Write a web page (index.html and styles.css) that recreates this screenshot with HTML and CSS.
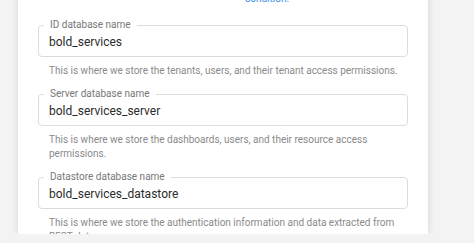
FILE: index.html
```html
<!DOCTYPE html>
<html lang="en">
<head>
  <meta charset="UTF-8" />
  <title>Database configuration</title>
  <link rel="stylesheet" href="styles.css">
</head>
<body>
  <div class="page">
    <div class="card">
      <p class="note"><a href="#">condition.</a></p>

      <fieldset class="field">
        <legend>ID database name</legend>
        <div class="value">bold_services</div>
      </fieldset>
      <p class="hint">This is where we store the tenants, users, and their tenant access permissions.</p>

      <fieldset class="field">
        <legend>Server database name</legend>
        <div class="value">bold_services_server</div>
      </fieldset>
      <p class="hint">This is where we store the dashboards, users, and their resource access permissions.</p>

      <fieldset class="field">
        <legend>Datastore database name</legend>
        <div class="value">bold_services_datastore</div>
      </fieldset>
      <p class="hint">This is where we store the authentication information and data extracted from REST data sources.</p>
    </div>
  </div>
</body>
</html>
```

FILE: styles.css
```css
* {
  box-sizing: border-box;
}

body {
  margin: 0;
  font-family: Roboto, 'Liberation Sans', sans-serif;
  background: #f3f3f3;
  overflow: hidden;
}

.page {
  padding-left: 18px;
  height: 243px;
}

.card {
  width: 410px;
  height: 100%;
  background: #fff;
  box-shadow: 0 0 8px rgba(0, 0, 0, 0.12);
  padding: 0 20px;
}

.note {
  margin: -9px 0 13px;
  padding-left: 207px;
  font-size: 10px;
  line-height: 15px;
}

.note a {
  color: #3d8ee8;
  text-decoration: none;
}

.field {
  margin: 10px 0 0;
  padding: 0 10px 4px;
  border: 1px solid #dcdcdc;
  border-radius: 4px;
  min-width: 0;
}

.note + .field {
  margin-top: 0;
}

.field legend {
  font-size: 10px;
  line-height: 12px;
  color: #777;
  padding: 0 6px;
  margin-left: -5px;
}

.value {
  font-size: 12px;
  line-height: 20px;
  color: #2b2b2b;
  padding-top: 1px;
}

.hint {
  margin: 7px 0 0;
  padding-left: 11px;
  padding-right: 10px;
  font-size: 10px;
  line-height: 14px;
  color: #8a8a8a;
}
```
